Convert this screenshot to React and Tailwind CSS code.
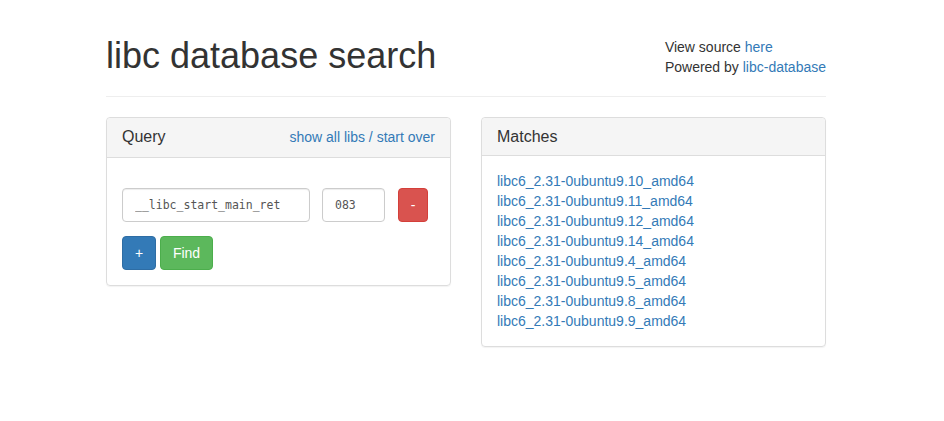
export default function App() {
  const matches = [
    'libc6_2.31-0ubuntu9.10_amd64',
    'libc6_2.31-0ubuntu9.11_amd64',
    'libc6_2.31-0ubuntu9.12_amd64',
    'libc6_2.31-0ubuntu9.14_amd64',
    'libc6_2.31-0ubuntu9.4_amd64',
    'libc6_2.31-0ubuntu9.5_amd64',
    'libc6_2.31-0ubuntu9.8_amd64',
    'libc6_2.31-0ubuntu9.9_amd64',
  ];

  return (
    <div className="min-h-[421px] bg-white text-[#333] text-[14px] leading-[20px] font-['Liberation_Sans',Arial,sans-serif]">
      <div className="ml-[106px] w-[720px]">
        {/* Header */}
        <div className="flex justify-between pt-[36px] pb-[10px] mb-[20px] border-b border-[#eee]">
          <h1 className="text-[36px] leading-[1.1] font-normal mb-[10px]">libc database search</h1>
          <div className="whitespace-nowrap pt-[1px]">
            <div>View source <a className="text-[#337ab7]" href="#">here</a></div>
            <div>Powered by <a className="text-[#337ab7]" href="#">libc-database</a></div>
          </div>
        </div>

        <div className="flex gap-[30px] items-start">
          {/* Query panel */}
          <div className="w-[345px] border border-[#ddd] rounded-[4px] shadow-[0_1px_1px_rgba(0,0,0,0.05)]">
            <div className="flex justify-between items-center h-[40px] px-[15px] bg-[#f5f5f5] border-b border-[#ddd] rounded-t-[4px]">
              <span className="text-[16px]">Query</span>
              <span>
                <a className="text-[#337ab7]" href="#">show all libs</a>
                <span className="text-[#337ab7]"> / </span>
                <a className="text-[#337ab7]" href="#">start over</a>
              </span>
            </div>
            <div className="px-[15px] pt-[30px] pb-[15px]">
              <div className="flex items-center">
                <input
                  readOnly
                  value="__libc_start_main_ret"
                  className="w-[188px] h-[34px] px-[12px] border border-[#ccc] rounded-[4px] text-[11.5px] text-[#555] font-['DejaVu_Sans_Mono',monospace] shadow-[inset_0_1px_1px_rgba(0,0,0,0.075)] outline-none"
                />
                <input
                  readOnly
                  value="083"
                  className="ml-[12px] w-[63px] h-[34px] px-[12px] border border-[#ccc] rounded-[4px] text-[11.5px] text-[#555] font-['DejaVu_Sans_Mono',monospace] shadow-[inset_0_1px_1px_rgba(0,0,0,0.075)] outline-none"
                />
                <button className="ml-[13px] w-[30px] h-[34px] bg-[#d9534f] border border-[#d43f3a] rounded-[4px] text-white text-[14px]">-</button>
              </div>
              <div className="flex mt-[14px] gap-[4px]">
                <button className="w-[34px] h-[34px] bg-[#337ab7] border border-[#2e6da4] rounded-[4px] text-white text-[14px]">+</button>
                <button className="w-[53px] h-[34px] bg-[#5cb85c] border border-[#4cae4c] rounded-[4px] text-white text-[14px]">Find</button>
              </div>
            </div>
          </div>

          {/* Matches panel */}
          <div className="w-[345px] border border-[#ddd] rounded-[4px] shadow-[0_1px_1px_rgba(0,0,0,0.05)]">
            <div className="px-[15px] py-[10px] bg-[#f5f5f5] border-b border-[#ddd] rounded-t-[4px]">
              <h3 className="text-[16px] leading-[1.1]">Matches</h3>
            </div>
            <div className="p-[15px]">
              {matches.map((m) => (
                <div key={m}>
                  <a className="text-[#337ab7]" href="#">{m}</a>
                </div>
              ))}
            </div>
          </div>
        </div>
      </div>
    </div>
  );
}
